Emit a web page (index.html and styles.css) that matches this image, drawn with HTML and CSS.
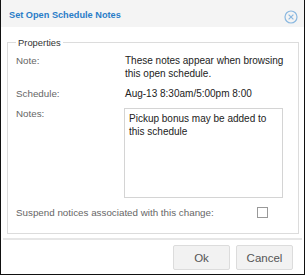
FILE: index.html
```html
<!DOCTYPE html>
<html lang="en">
<head>
  <meta charset="UTF-8" />
  <title>Set Open Schedule Notes</title>
  <link rel="stylesheet" href="styles.css">
</head>
<body>
  <div class="dialog">
    <div class="dialog-header">
      <span class="dialog-title">Set Open Schedule Notes</span>
      <svg class="close-icon" width="14" height="14" viewBox="0 0 14 14">
        <circle cx="7" cy="7" r="6" fill="none" stroke="#8ab8e0" stroke-width="1.2" />
        <path d="M4.6 4.6 L9.4 9.4 M9.4 4.6 L4.6 9.4" stroke="#8ab8e0" stroke-width="1.2" />
      </svg>
    </div>

    <div class="dialog-body">
      <fieldset class="props">
        <legend>Properties</legend>
        <div class="props-grid">
          <div class="label">Note:</div>
          <div class="value">These notes appear when browsing this open schedule.</div>

          <div class="label">Schedule:</div>
          <div class="value">Aug-13 8:30am/5:00pm 8:00</div>

          <div class="label">Notes:</div>
          <div class="value"><textarea class="notes">Pickup bonus may be added to this schedule</textarea></div>
        </div>
        <div class="suspend-row">
          <span class="label">Suspend notices associated with this change:</span>
          <span class="checkbox"></span>
        </div>
      </fieldset>
    </div>

    <div class="dialog-footer">
      <button class="btn">Ok</button>
      <button class="btn">Cancel</button>
    </div>
  </div>
</body>
</html>
```

FILE: styles.css
```css
html, body {
  margin: 0;
  padding: 0;
  background: #fff;
}
body {
  font-family: "Liberation Sans", Arial, sans-serif;
  font-size: 10px;
  color: #333;
}
.dialog {
  width: 305px;
  height: 275px;
  box-sizing: border-box;
  border: 1px solid #111;
  border-top: none;
  display: flex;
  flex-direction: column;
}
.dialog-header {
  height: 27px;
  background: #f4f4f4;
  display: flex;
  align-items: center;
  justify-content: space-between;
  padding: 2px 6px 0 8px;
  box-sizing: border-box;
}
.dialog-title {
  color: #2a7dc8;
  font-weight: bold;
  font-size: 9.2px;
}
.close-icon {
  display: block;
  margin-top: 4px;
}
.dialog-body {
  padding: 10px 5px 0 6px;
  flex: 1;
}
.props {
  margin: 0;
  padding: 6px 8px 14px 8px;
  border: 1px solid #dcdcdc;
  min-width: 0;
  line-height: 13px;
}
.props legend {
  padding: 0 2px;
  color: #333;
  font-size: 9.4px;
  line-height: normal;
}
.props-grid {
  display: grid;
  grid-template-columns: 109px 1fr;
  row-gap: 7px;
}
.label {
  color: #666;
  font-size: 9.8px;
}
.value {
  color: #222;
}
.notes {
  display: block;
  width: 159px;
  height: 90px;
  box-sizing: border-box;
  margin: 1px 0 0 -1px;
  padding: 3px 4px;
  border: 1px solid #d4d4d4;
  font-family: inherit;
  font-size: 10px;
  line-height: 13px;
  color: #222;
  resize: none;
  overflow: hidden;
}
.suspend-row {
  display: flex;
  align-items: center;
  justify-content: space-between;
  margin-top: 8px;
  padding-right: 22px;
}
.checkbox {
  width: 9px;
  height: 9px;
  border: 1px solid #999;
  background: #fff;
}
.dialog-footer {
  margin: 0 2px;
  border-top: 2px solid #e6e6e6;
  padding: 5px 9px 4px 0;
  display: flex;
  justify-content: flex-end;
  gap: 6px;
}
.btn {
  width: 57px;
  height: 25px;
  background: #f2f2f2;
  border: 1px solid #dcdcdc;
  border-radius: 2px;
  color: #555;
  font-family: inherit;
  font-size: 11.5px;
  padding: 0;
}
```
